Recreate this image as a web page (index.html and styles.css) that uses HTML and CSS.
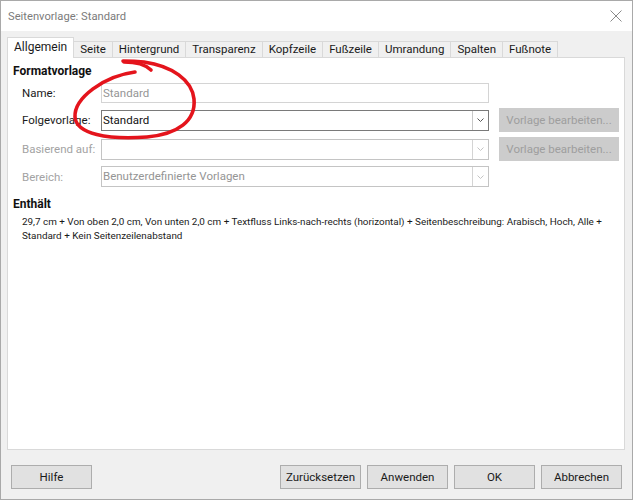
FILE: index.html
```html
<!DOCTYPE html>
<html lang="de">
<head>
<meta charset="utf-8">
<title>Seitenvorlage: Standard</title>
<link rel="stylesheet" href="styles.css">
</head>
<body>
<div class="window">
  <div class="titlebar">
    <span class="title">Seitenvorlage: Standard</span>
    <svg class="close" width="12" height="12" viewBox="0 0 12 12"><path d="M0.5 0.5 L11.5 11.5 M11.5 0.5 L0.5 11.5" stroke="#8a8a8a" stroke-width="1" fill="none"/></svg>
  </div>
  <div class="content">
    <div class="tabs">
      <div class="tab active">Allgemein</div>
      <div class="tab">Seite</div>
      <div class="tab">Hintergrund</div>
      <div class="tab">Transparenz</div>
      <div class="tab">Kopfzeile</div>
      <div class="tab">Fußzeile</div>
      <div class="tab">Umrandung</div>
      <div class="tab">Spalten</div>
      <div class="tab">Fußnote</div>
    </div>
    <div class="panel">
      <div class="heading first">Formatvorlage</div>
      <div class="form">
        <div class="label">Name:</div>
        <div class="field input"><span class="value muted">Standard</span></div>
        <div class="spacer"></div>

        <div class="label">Folgevorlage:</div>
        <div class="field combo"><span class="value">Standard</span><span class="arrow"><svg width="7" height="4" viewBox="0 0 7 4"><path d="M0.5 0.5 L3.5 3.5 L6.5 0.5" stroke="#555" fill="none"/></svg></span></div>
        <div class="btn disabled">Vorlage bearbeiten...</div>

        <div class="label off">Basierend auf:</div>
        <div class="field combo off"><span class="value"></span><span class="arrow"><svg width="7" height="4" viewBox="0 0 7 4"><path d="M0.5 0.5 L3.5 3.5 L6.5 0.5" stroke="#c4c4c4" fill="none"/></svg></span></div>
        <div class="btn disabled">Vorlage bearbeiten...</div>

        <div class="label off">Bereich:</div>
        <div class="field combo off"><span class="value muted">Benutzerdefinierte Vorlagen</span><span class="arrow"><svg width="7" height="4" viewBox="0 0 7 4"><path d="M0.5 0.5 L3.5 3.5 L6.5 0.5" stroke="#c4c4c4" fill="none"/></svg></span></div>
        <div class="spacer"></div>
      </div>
      <div class="heading second">Enthält</div>
      <p class="desc">29,7 cm + Von oben 2,0 cm, Von unten 2,0 cm + Textfluss Links-nach-rechts (horizontal) + Seitenbeschreibung: Arabisch, Hoch, Alle + Standard + Kein Seitenzeilenabstand</p>
    </div>
    <div class="footer">
      <div class="btn push">Hilfe</div>
      <div class="right">
        <div class="btn push">Zurücksetzen</div>
        <div class="btn push">Anwenden</div>
        <div class="btn push">OK</div>
        <div class="btn push">Abbrechen</div>
      </div>
    </div>
  </div>
  <svg class="annotation" width="633" height="500" viewBox="0 0 633 500">
    <path d="M135 72 C 104 76, 74 98, 75 117 C 76 134, 108 140, 147 137 C 178 134, 196 121, 194 99 C 192 80, 172 66, 144 62 C 135 61, 128 61, 123 61" stroke="#e4141c" stroke-width="3.6" fill="none" stroke-linecap="round" stroke-linejoin="round"/>
    <path d="M124 62 C 134 62, 145 64, 151 70" stroke="#e4141c" stroke-width="3.6" fill="none" stroke-linecap="round"/>
  </svg>
</div>
</body>
</html>
```

FILE: styles.css
```css
html, body {
  margin: 0;
  padding: 0;
  background: #ffffff;
}

body {
  font-family: Roboto, "Noto Sans", sans-serif;
  font-size: 11.5px;
  color: #1a1a1a;
}

.window {
  position: relative;
  width: 633px;
  height: 500px;
  box-sizing: border-box;
  border: 1px solid #a9a9a9;
  background: #f0f0f0;
  display: flex;
  flex-direction: column;
}

.titlebar {
  height: 30px;
  background: #ffffff;
  display: flex;
  align-items: center;
  justify-content: space-between;
  padding: 0 10px 0 7px;
  flex: none;
}

.title {
  color: #7b7b7b;
  font-size: 11.2px;
}

.close {
  display: block;
}

.content {
  flex: 1;
  display: flex;
  flex-direction: column;
  padding: 6px 7px 0 6px;
}

.tabs {
  display: flex;
  align-items: flex-end;
  height: 20px;
  position: relative;
  z-index: 2;
}

.tab {
  height: 16px;
  line-height: 15px;
  padding: 0 6px;
  border: 1px solid #d9d9d9;
  border-bottom: none;
  border-left: none;
  background: #f0f0f0;
  color: #1a1a1a;
  box-sizing: border-box;
}

.tab.active {
  height: 21px;
  line-height: 19px;
  margin-bottom: -1px;
  background: #ffffff;
  border-left: 1px solid #d9d9d9;
  padding: 0 6px 0 6px;
  font-size: 12px;
}

.panel {
  height: 393px;
  box-sizing: border-box;
  border: 1px solid #d9d9d9;
  background: #ffffff;
  padding: 0 6px 0 5px;
}

.heading {
  font-weight: bold;
  font-size: 12px;
  line-height: 16px;
  color: #111;
}

.heading.first {
  margin-top: 5px;
}

.heading.second {
  margin-top: 9px;
}

.form {
  display: grid;
  grid-template-columns: 69px 388px 120px;
  grid-template-rows: 20px 24px 24px 21px;
  column-gap: 10px;
  row-gap: 5px;
  align-items: center;
  margin: 4px 0 0 9px;
}

.label {
  color: #1a1a1a;
  white-space: nowrap;
}

.label.off {
  color: #a3a3a3;
}

.field {
  height: 20px;
  box-sizing: border-box;
  border: 1px solid #d4d4d4;
  background: #ffffff;
  display: flex;
  align-items: stretch;
}

.field.combo {
  height: 21px;
  border-color: #7a7a7a;
}

.field.combo.off {
  border-color: #c4c4c4;
}

.value {
  flex: 1;
  padding-left: 1px;
  line-height: 18px;
  color: #111;
}

.value.muted {
  color: #959595;
}

.arrow {
  width: 15px;
  border-left: 1px solid #c8c8c8;
  background: #ffffff;
  display: flex;
  align-items: center;
  justify-content: center;
}

.field.combo.off .arrow {
  border-left-color: #d4d4d4;
}

.btn {
  box-sizing: border-box;
  display: flex;
  align-items: center;
  justify-content: center;
}

.btn.disabled {
  height: 24px;
  background: #cccccc;
  color: #9e9e9e;
}

.desc {
  margin: 3px 0 0 9px;
  line-height: 14px;
  font-size: 9.9px;
  color: #1a1a1a;
}

.footer {
  display: flex;
  justify-content: space-between;
  padding: 15px 3px 0 4px;
}

.right {
  display: flex;
  gap: 6px;
}

.btn.push {
  width: 81px;
  height: 24px;
  background: #e1e1e1;
  border: 1px solid #adadad;
  color: #1a1a1a;
}

.annotation {
  position: absolute;
  left: -1px;
  top: -1px;
  pointer-events: none;
  z-index: 5;
}
```
